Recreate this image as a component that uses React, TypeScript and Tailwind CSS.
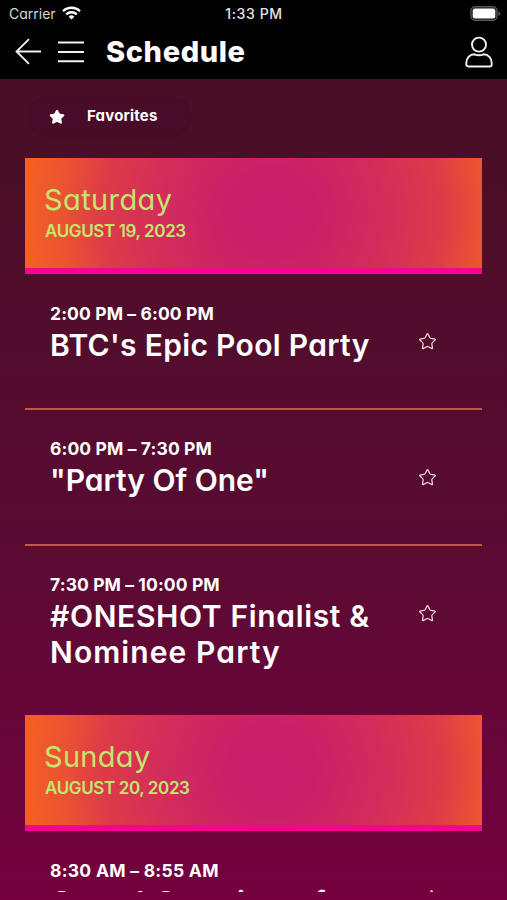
import { Star } from 'lucide-react';

type Event = { time: string; lines: { text: string; tracking: string }[]; timeTracking: string };

const days: { name: string; date: string; nameTracking: string; dateTracking: string; events: Event[] }[] = [
  {
    name: 'Saturday',
    date: 'AUGUST 19, 2023',
    nameTracking: 'tracking-[0.4px]',
    dateTracking: 'tracking-[-0.38px]',
    events: [
      {
        time: '2:00 PM – 6:00 PM',
        timeTracking: 'tracking-[0.12px]',
        lines: [{ text: "BTC's Epic Pool Party", tracking: 'tracking-[0.33px]' }],
      },
      {
        time: '6:00 PM – 7:30 PM',
        timeTracking: 'tracking-[0.12px]',
        lines: [{ text: '"Party Of One"', tracking: 'tracking-[0px]' }],
      },
      {
        time: '7:30 PM – 10:00 PM',
        timeTracking: 'tracking-[0.1px]',
        lines: [
          { text: '#ONESHOT Finalist &', tracking: 'tracking-[0.65px]' },
          { text: 'Nominee Party', tracking: 'tracking-[1.1px]' },
        ],
      },
    ],
  },
  {
    name: 'Sunday',
    date: 'AUGUST 20, 2023',
    nameTracking: 'tracking-[0.3px]',
    dateTracking: 'tracking-[-0.38px]',
    events: [
      {
        time: '8:30 AM – 8:55 AM',
        timeTracking: 'tracking-[0.28px]',
        lines: [{ text: 'Grand Opening of event', tracking: 'tracking-[1.2px]' }],
      },
    ],
  },
];

const StatusBar = () => (
  <div className="grid h-7 grid-cols-3 items-center pl-[9px] pr-[6px] text-[14px] leading-7">
    <div className="flex items-center gap-[6px] text-[#d8d8d8]">
      Carrier
      <svg className="-mt-[2px]" width="19" height="14" viewBox="0 0 19 14" fill="none" stroke="white" strokeWidth="2.3">
        <path d="M1 5.2a12.2 12.2 0 0 1 17 0" />
        <path d="M4.2 8.4a7.6 7.6 0 0 1 10.6 0" />
        <path d="M9.5 13.6 6.6 10.7a4.2 4.2 0 0 1 5.8 0Z" fill="white" stroke="none" />
      </svg>
    </div>
    <div className="-ml-[2px] text-center font-medium tracking-[0.6px] text-[#e4e4e4]">1:33 PM</div>
    <svg className="-mt-[2px] justify-self-end" width="31" height="15" viewBox="0 0 31 15">
      <rect x="1" y="0.8" width="26" height="13.4" rx="4" fill="#111" stroke="#55555a" strokeWidth="1.4" />
      <rect x="2.7" y="2.6" width="22.6" height="9.8" rx="2" fill="white" />
      <path d="M28.4 5.2c2.6.8 2.6 3.8 0 4.6Z" fill="#55555a" />
    </svg>
  </div>
);

const App = () => {
  return (
    <div className="flex h-[900px] w-[507px] flex-col overflow-hidden bg-linear-to-b from-[#4b0e27] from-20% via-[#5b0a33] via-62% to-[#74003e] font-['Inter',sans-serif] text-white [font-feature-settings:'cv11']">
      <header className="h-[79px] shrink-0 bg-black">
        <StatusBar />
        <div className="flex h-[47px] items-center pl-[15px] pr-[14px]">
          <svg width="27" height="27" viewBox="0 0 27 27" fill="none" stroke="#f2f2f2" strokeWidth="1.8">
            <path d="M14 1.2 1.5 13.5 14 25.8M1.5 13.5H26" />
          </svg>
          <svg className="ml-[15px]" width="28" height="22" viewBox="0 0 28 22" stroke="#f2f2f2" strokeWidth="2">
            <path d="M1 1.6h26M1 10.9h26M1 20.2h26" />
          </svg>
          <h1 className="ml-[21px] text-[29px] font-extrabold leading-[47px] tracking-[0.6px]">Schedule</h1>
          <svg className="ml-auto" width="28" height="32" viewBox="0 0 28 32" fill="none" stroke="#f2f2f2" strokeWidth="1.9">
            <circle cx="14" cy="8.6" r="7" />
            <path d="M9.5 18.3c2.8 1.2 6.2 1.2 9 0 4.8 0 8.2 3.8 8.2 8.6v1.6c0 1.2-.8 2-2 2H3.3c-1.2 0-2-.8-2-2v-1.6c0-4.8 3.4-8.6 8.2-8.6Z" />
          </svg>
        </div>
      </header>

      <main className="h-[813px] overflow-hidden px-[25px] pt-[19px]">
        <button className="ml-[3px] flex h-[37px] w-[162px] items-center rounded-full bg-[#480c28] pl-[21px] shadow-[0_0_3px_rgba(45,5,30,0.45)]">
          <Star className="mt-px size-4" fill="white" strokeWidth={2} />
          <span className="-mt-[2px] ml-[22px] text-[15px] font-bold leading-9 tracking-[0.2px]">Favorites</span>
        </button>

        <div className="mt-[23px]">
          {days.map((day) => (
            <section key={day.name}>
              <div className="h-[116px] border-b-[6px] border-[#fc008e] bg-[radial-gradient(circle_at_247px_55px,#ca1e6b_0px,#ca1f69_40px,#d32d5a_115px,#dd3b48_170px,#eb5430_212px,#f45f25_245px)] pl-[19px] pt-[24px] text-[#c3e66d]">
                <h2 className={`text-[29px] font-normal leading-[36px] ${day.nameTracking}`}>{day.name}</h2>
                <p className={`ml-px mt-[2px] text-[17px] font-semibold leading-[22px] ${day.dateTracking}`}>{day.date}</p>
              </div>

              {day.events.map((event) => (
                <article
                  key={event.time}
                  className="flex min-h-[135.8px] justify-between border-b-2 border-[#bd5941] pb-[43px] pl-[25px] pr-[45px] pt-[29.5px] last:border-b-0 last:pb-[45px]"
                >
                  <div className="whitespace-nowrap">
                    <p className={`mb-1 text-[17.5px] font-bold leading-[20px] ${event.timeTracking}`}>{event.time}</p>
                    {event.lines.map((line) => (
                      <h3 key={line.text} className={`text-[30px] font-semibold leading-[35.5px] ${line.tracking}`}>
                        {line.text}
                      </h3>
                    ))}
                  </div>
                  <Star className="mt-[28.5px] size-[19px] shrink-0 text-[#f3cfe0]" strokeWidth={1.6} />
                </article>
              ))}
            </section>
          ))}
        </div>
      </main>
    </div>
  );
};

export default App;
